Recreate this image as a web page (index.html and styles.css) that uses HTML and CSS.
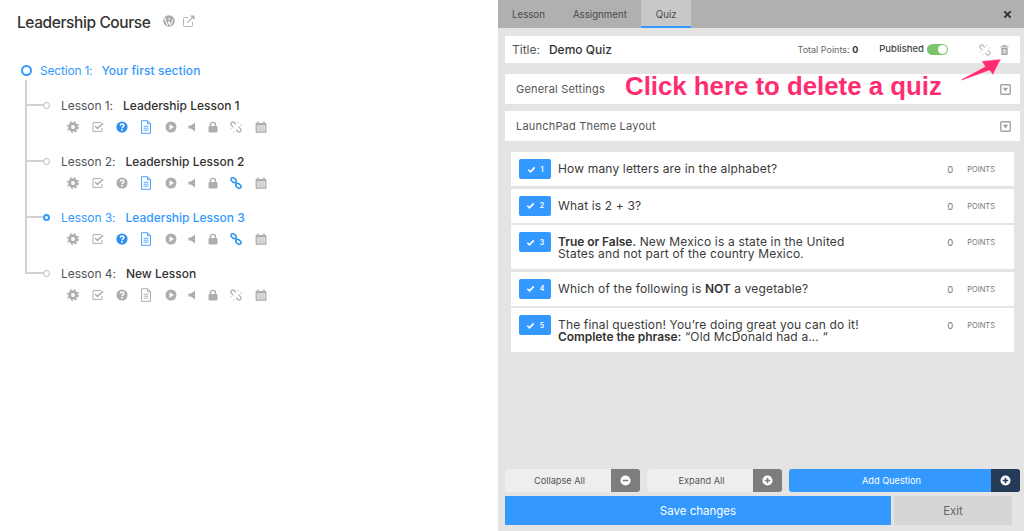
FILE: index.html
```html
<!DOCTYPE html>
<html lang="en">
<head>
<meta charset="utf-8">
<title>Leadership Course</title>
<link rel="stylesheet" href="styles.css">
</head>
<body>
<svg class="sprites" width="0" height="0" aria-hidden="true">
  <symbol id="i-gear" viewBox="0 0 12 12"><circle cx="6" cy="6" r="3.3" fill="none" stroke="currentColor" stroke-width="2.6"/><circle cx="6" cy="6" r="5" fill="none" stroke="currentColor" stroke-width="1.8" stroke-dasharray="2 1.93"/></symbol>
  <symbol id="i-check" viewBox="0 0 12 12"><path d="M10 7v3.4H1V1.600h8" fill="none" stroke="currentColor" stroke-width="1"/><path d="M3 5l2.400 2.400L11 2.200" fill="none" stroke="currentColor" stroke-width="1.500"/></symbol>
  <symbol id="i-help" viewBox="0 0 12 12"><circle cx="6" cy="6" r="5.600" fill="currentColor"/><path d="M4.200 4.600C4.300 3.500 5 3 6 3s1.900.6 1.900 1.600C7.900 5.900 6 5.800 6 7.300" fill="none" stroke="#fff" stroke-width="1.400"/><rect x="5.200" y="8" width="1.600" height="1.500" fill="#fff"/></symbol>
  <symbol id="i-doc" viewBox="0 0 12 14"><path d="M1.500.7h6l3 3v9.600h-9zM7.500.7v3h3" fill="none" stroke="currentColor" stroke-width="1"/><path d="M3.500 6.200h5M3.500 8.200h5M3.500 10.200h5" stroke="currentColor" stroke-width=".9"/></symbol>
  <symbol id="i-play" viewBox="0 0 12 12"><circle cx="6" cy="6" r="5.500" fill="currentColor"/><path d="M4.500 3.200L9 6l-4.500 2.800z" fill="#fff"/></symbol>
  <symbol id="i-sound" viewBox="0 0 12 12"><path d="M2.500 4.500H5L9 1.500v9l-4-3H2.500z" fill="currentColor"/></symbol>
  <symbol id="i-lock" viewBox="0 0 12 12"><rect x="1.500" y="5" width="9" height="6.500" rx="1" fill="currentColor"/><path d="M3.500 5.500V3.800a2.500 2.500 0 0 1 5 0v1.700" fill="none" stroke="currentColor" stroke-width="1.300"/></symbol>
  <symbol id="i-unlink" viewBox="0 0 12 12"><path d="M5.800 3.400L4.200 1.500a1.900 1.900 0 0 0-2.800 2.700L3.400 6.300M6.200 8.600l1.600 1.900a1.900 1.900 0 0 0 2.800-2.700L8.600 5.700" fill="none" stroke="currentColor" stroke-width="1.200"/><path d="M.4 8l1.200-.4M3.400 11.500l.4-1.300M7.800 2.200L8.300.7M10 4.300l1.400-.5" stroke="currentColor" stroke-width=".8"/></symbol>
  <symbol id="i-link" viewBox="0 0 12 12"><rect x=".8" y="1.200" width="5.600" height="3.800" rx="1.900" transform="rotate(40 3.600 3.100)" fill="none" stroke="currentColor" stroke-width="1.500"/><rect x="5.600" y="7" width="5.600" height="3.800" rx="1.900" transform="rotate(40 8.400 8.900)" fill="none" stroke="currentColor" stroke-width="1.500"/><path d="M4.800 4.800l2.400 2.400" stroke="currentColor" stroke-width="1.500"/></symbol>
  <symbol id="i-cal" viewBox="0 0 12 12"><path d="M.6 2h10.800v9.800H.6z" fill="currentColor"/><path d="M3 .3v2.400M9 .3v2.400" stroke="currentColor" stroke-width="1.400"/><path d="M1.500 5h9M1.500 7h9M1.500 9h9M3.200 4v7M5.200 4v7M7.200 4v7M9.200 4v7" stroke="#fff" stroke-width=".6"/></symbol>
  <symbol id="i-trash" viewBox="0 0 12 12"><path d="M1.500 2.500h9M4.200 2.300V1h3.600v1.300" fill="none" stroke="currentColor" stroke-width="1"/><path d="M2.500 3.500h7v8h-7z" fill="currentColor"/><path d="M4.500 5v5M6 5v5M7.500 5v5" stroke="#fff" stroke-width=".7"/></symbol>
  <symbol id="i-drop" viewBox="0 0 12 12"><rect x=".8" y=".8" width="10.400" height="10.400" rx="1.200" fill="none" stroke="currentColor" stroke-width="1.500"/><path d="M3 4.200h6L6 8.200z" fill="currentColor"/></symbol>
  <symbol id="i-tick" viewBox="0 0 10 10"><path d="M1.500 5.300l2.400 2.300 4.700-5" fill="none" stroke="currentColor" stroke-width="1.800"/></symbol>
  <symbol id="i-minus" viewBox="0 0 12 12"><circle cx="6" cy="6" r="5.500" fill="#fff"/><path d="M3 6h6" stroke="currentColor" stroke-width="1.800"/></symbol>
  <symbol id="i-plus" viewBox="0 0 12 12"><circle cx="6" cy="6" r="5.500" fill="#fff"/><path d="M3 6h6M6 3v6" stroke="currentColor" stroke-width="1.800"/></symbol>
</svg>

<main class="page">
  <section class="course">
    <header class="course-head">
      <h1 class="course-title">Leadership Course</h1>
      <svg class="head-icon wp" viewBox="0 0 12 12"><circle cx="6" cy="6" r="5.800" fill="currentColor"/><path d="M1.800 4.200L4.500 10.400 6 6.500 7.500 10.400 10.300 4.200M1.300 3.900h2.200M5 3.900h2.400" fill="none" stroke="#fff" stroke-width="1"/></svg>
      <svg class="head-icon ext" viewBox="0 0 12 12"><path d="M9.500 7v3.500a1 1 0 0 1-1 1h-7a1 1 0 0 1-1-1v-7a1 1 0 0 1 1-1H5" fill="none" stroke="currentColor" stroke-width="1"/><path d="M4.500 7.500L10 2" stroke="currentColor" stroke-width="1.300"/><path d="M7 .6h4.600v4.600z" fill="currentColor"/></svg>
    </header>
    <div class="section-row">
      <span class="section-dot"></span>
      <span class="section-num">Section 1:</span>
      <span class="section-name">Your first section</span>
    </div>
    <ul class="lessons">
      <li class="lesson">
        <div class="lesson-head"><span class="lesson-dot"></span><span class="lesson-num">Lesson 1:</span><strong class="lesson-name">Leadership Lesson 1</strong></div>
        <div class="tools">
          <svg class="tool"><use href="#i-gear"/></svg><svg class="tool"><use href="#i-check"/></svg><svg class="tool on"><use href="#i-help"/></svg><svg class="tool tall on"><use href="#i-doc"/></svg><svg class="tool"><use href="#i-play"/></svg><svg class="tool"><use href="#i-sound"/></svg><svg class="tool"><use href="#i-lock"/></svg><svg class="tool"><use href="#i-unlink"/></svg><svg class="tool"><use href="#i-cal"/></svg>
        </div>
      </li>
      <li class="lesson">
        <div class="lesson-head"><span class="lesson-dot"></span><span class="lesson-num">Lesson 2:</span><strong class="lesson-name">Leadership Lesson 2</strong></div>
        <div class="tools">
          <svg class="tool"><use href="#i-gear"/></svg><svg class="tool"><use href="#i-check"/></svg><svg class="tool"><use href="#i-help"/></svg><svg class="tool tall on"><use href="#i-doc"/></svg><svg class="tool"><use href="#i-play"/></svg><svg class="tool"><use href="#i-sound"/></svg><svg class="tool"><use href="#i-lock"/></svg><svg class="tool on"><use href="#i-link"/></svg><svg class="tool"><use href="#i-cal"/></svg>
        </div>
      </li>
      <li class="lesson current">
        <div class="lesson-head"><span class="lesson-dot"></span><span class="lesson-num">Lesson 3:</span><strong class="lesson-name">Leadership Lesson 3</strong></div>
        <div class="tools">
          <svg class="tool"><use href="#i-gear"/></svg><svg class="tool"><use href="#i-check"/></svg><svg class="tool on"><use href="#i-help"/></svg><svg class="tool tall on"><use href="#i-doc"/></svg><svg class="tool"><use href="#i-play"/></svg><svg class="tool"><use href="#i-sound"/></svg><svg class="tool"><use href="#i-lock"/></svg><svg class="tool on"><use href="#i-link"/></svg><svg class="tool"><use href="#i-cal"/></svg>
        </div>
      </li>
      <li class="lesson">
        <div class="lesson-head"><span class="lesson-dot"></span><span class="lesson-num">Lesson 4:</span><strong class="lesson-name">New Lesson</strong></div>
        <div class="tools">
          <svg class="tool"><use href="#i-gear"/></svg><svg class="tool"><use href="#i-check"/></svg><svg class="tool"><use href="#i-help"/></svg><svg class="tool tall"><use href="#i-doc"/></svg><svg class="tool"><use href="#i-play"/></svg><svg class="tool"><use href="#i-sound"/></svg><svg class="tool"><use href="#i-lock"/></svg><svg class="tool"><use href="#i-unlink"/></svg><svg class="tool"><use href="#i-cal"/></svg>
        </div>
      </li>
    </ul>
  </section>

  <section class="editor">
    <nav class="tabs">
      <span class="tab">Lesson</span>
      <span class="tab">Assignment</span>
      <span class="tab active">Quiz</span>
      <svg class="close" viewBox="0 0 10 10"><path d="M1.500 1.500l7 7M8.500 1.500l-7 7" stroke="currentColor" stroke-width="2.200"/></svg>
    </nav>

    <div class="title-row">
      <span class="title-label">Title:</span>
      <strong class="title-value">Demo Quiz</strong>
      <span class="total">Total Points: <b>0</b></span>
      <span class="published">Published</span>
      <span class="toggle"></span>
      <svg class="row-icon unlink"><use href="#i-unlink"/></svg>
      <svg class="row-icon trash"><use href="#i-trash"/></svg>
    </div>

    <div class="panel first"><span>General Settings</span><svg class="drop"><use href="#i-drop"/></svg></div>
    <div class="panel"><span>LaunchPad Theme Layout</span><svg class="drop"><use href="#i-drop"/></svg></div>

    <ol class="questions">
      <li class="question"><span class="badge"><svg class="tick"><use href="#i-tick"/></svg>1</span><p class="q-text">How many letters are in the alphabet?</p><span class="q-score">0</span><span class="q-unit">POINTS</span></li>
      <li class="question"><span class="badge"><svg class="tick"><use href="#i-tick"/></svg>2</span><p class="q-text">What is 2 + 3?</p><span class="q-score">0</span><span class="q-unit">POINTS</span></li>
      <li class="question"><span class="badge"><svg class="tick"><use href="#i-tick"/></svg>3</span><p class="q-text"><b>True or False.</b> New Mexico is a state in the United<br>States and not part of the country Mexico.</p><span class="q-score">0</span><span class="q-unit">POINTS</span></li>
      <li class="question"><span class="badge"><svg class="tick"><use href="#i-tick"/></svg>4</span><p class="q-text">Which of the following is <b>NOT</b> a vegetable?</p><span class="q-score">0</span><span class="q-unit">POINTS</span></li>
      <li class="question"><span class="badge"><svg class="tick"><use href="#i-tick"/></svg>5</span><p class="q-text">The final question! You’re doing great you can do it!<br><b>Complete the phrase:</b> “Old McDonald had a… “</p><span class="q-score">0</span><span class="q-unit">POINTS</span></li>
    </ol>

    <footer class="footer">
      <div class="actions">
        <button class="action"><span class="action-label">Collapse All</span><span class="action-icon"><svg class="action-svg"><use href="#i-minus"/></svg></span></button>
        <button class="action"><span class="action-label">Expand All</span><span class="action-icon"><svg class="action-svg"><use href="#i-plus"/></svg></span></button>
        <button class="action add"><span class="action-label">Add Question</span><span class="action-icon"><svg class="action-svg"><use href="#i-plus"/></svg></span></button>
      </div>
      <div class="submit">
        <button class="save">Save changes</button>
        <button class="exit">Exit</button>
      </div>
    </footer>

    <div class="callout">Click here to delete a quiz</div>
    <svg class="arrow" viewBox="0 0 50 30"><path d="M1 23.500L25 10.500 21.500 5 41 3 33 19 29.500 14.500 2 24.500z" fill="#ff2d6f" stroke="#fff" stroke-width=".5"/></svg>
  </section>
</main>
</body>
</html>
```
FILE: styles.css
```css
* { box-sizing: border-box; }
html, body { margin: 0; padding: 0; height: 531px; overflow: hidden; background: #fff; }
body { font-family: Inter, "Noto Sans", "Liberation Sans", sans-serif; color: #3a3a3a; }
.sprites { position: absolute; }
ul, ol { list-style: none; margin: 0; padding: 0; }
p, h1 { margin: 0; }
button { font: inherit; border: 0; padding: 0; cursor: pointer; }

.page { display: flex; width: 1024px; height: 531px; }

/* Course tree */
.course { width: 498px; flex: none; }
.course-head { display: flex; align-items: center; height: 44px; padding-left: 17px; }
.course-title { font-size: 15.500px; font-weight: 500; color: #333; letter-spacing: -.4px; }
.head-icon { color: #aaa; }
.wp { width: 12px; height: 12px; margin-left: 12px; position: relative; top: -1px; }
.ext { width: 12px; height: 12px; margin-left: 8px; color: #b5b5b5; position: relative; top: -1px; }

.section-row { display: flex; align-items: center; height: 20px; margin-top: 16px; padding-left: 21px; font-size: 12px; color: #3399ff; letter-spacing: .08px; }
.section-dot { width: 11px; height: 11px; border: 2px solid #3399ff; border-radius: 50%; margin-right: 8px; }
.section-num { letter-spacing: -.2px; }
.section-name { margin-left: 9px; font-weight: 500; }

.lessons { margin-left: 25px; }
.lesson { position: relative; height: 56px; padding-left: 36px; }
.lesson::before { content: ""; position: absolute; left: 0; top: 0; bottom: 0; width: 2px; background: #d2d2d2; }
.lesson:last-child::before { bottom: 30px; }
.lesson-head { position: relative; display: flex; align-items: center; height: 18px; margin-top: 0; top: 16px; font-size: 12px; }
.lesson-head::before { content: ""; position: absolute; left: -36px; top: 8px; width: 18px; height: 2px; background: #d2d2d2; }
.lesson-dot { position: absolute; left: -18px; top: 6px; width: 7px; height: 7px; border: 1px solid #b5b5b5; border-radius: 50%; background: #fff; }
.lesson-num { color: #555; letter-spacing: -.05px; }
.lesson-name { margin-left: 10px; font-weight: 500; color: #333; letter-spacing: 0; }
.current .lesson-num, .current .lesson-name { color: #3399ff; }
.current .lesson-dot { border: 2px solid #3399ff; }

.tools { display: grid; grid-template-columns: 25px 25px 23px 25px 25px 17px 25px 21px 29px; margin-top: 19.500px; margin-left: -1px; height: 18px; align-items: center; justify-items: center; }
.tool { width: 12px; height: 12px; color: #adadad; }
.tool.tall { height: 14px; }
.tool.on { color: #2f90ee; }
.tool.tall.on { color: #4da3f5; }

/* Editor */
.editor { position: relative; flex: 1; display: flex; flex-direction: column; background: #e4e4e4; }
.tabs { display: flex; align-items: stretch; height: 28px; background: #b0b0b0; font-size: 9.700px; color: #4a4a4a; }
.tab { display: flex; align-items: center; padding: 0 14px; }
.tab.active { background: #c8c8c8; border-bottom: 2px solid #3399ff; padding: 2px 14px 0 15px; }
.close { width: 9px; height: 9px; margin: auto 12px auto auto; color: #333; }

.title-row { display: flex; align-items: center; height: 27px; margin: 8px 4px 0 7px; padding: 0 10px 0 7px; background: #fff; }
.title-label { font-size: 12px; color: #555; }
.title-value { margin-left: 9px; font-size: 12px; font-weight: 500; color: #333; }
.total { margin-left: auto; font-size: 9px; color: #666; }
.total b { color: #333; }
.published { margin-left: 21px; font-size: 9.500px; font-weight: 500; color: #444; position: relative; top: -1px; }
.toggle { position: relative; width: 21px; height: 11px; margin-left: 3px; border-radius: 6px; background: #7dc36b; }
.toggle::after { content: ""; position: absolute; right: 1px; top: 1px; width: 9px; height: 9px; border-radius: 50%; background: #fff; }
.row-icon { width: 11px; height: 12px; color: #b0b0b0; }
.unlink { width: 12px; margin-left: 31px; color: #bbb; }
.trash { margin-left: 8px; color: #a5a5a5; }

.panel { display: flex; align-items: center; justify-content: space-between; height: 30px; margin: 7px 4px 0 7px; padding: 0 9px 0 11px; background: #fff; font-size: 11px; color: #555; letter-spacing: .2px; }
.panel.first { margin-top: 11px; }
.drop { width: 11px; height: 11px; color: #a3a3a3; }

.questions { display: flex; flex-direction: column; gap: 2.600px; margin: 11px 10px 0 13px; }
.question { display: flex; align-items: flex-start; min-height: 34px; padding: 7px 19px 7px 8px; background: #fff; }
.badge { flex: none; display: flex; align-items: center; justify-content: center; gap: 5px; width: 32px; height: 20px; border-radius: 2px; background: #3399ff; color: #fff; font-size: 7px; font-weight: 600; }
.tick { width: 9px; height: 9px; }
.q-text { flex: 1; margin: 4px 0 3px 7px; font-size: 12px; line-height: 11.500px; color: #3a3a3a; letter-spacing: .16px; }
.q-text b { font-weight: 600; color: #333; letter-spacing: -.06px; }
.q-score { margin-top: 5px; width: 20px; font-size: 9.500px; line-height: 11px; color: #777; }
.q-unit { margin-top: 5px; font-size: 7.500px; line-height: 11px; color: #777; }

.footer { margin-top: auto; padding: 0 4px 6px 7px; }
.actions { display: flex; gap: 7px; height: 23px; }
.action { display: flex; width: 135px; height: 23px; border-radius: 3px; overflow: hidden; background: #eee; color: #555; font-size: 9.200px; }
.action-label { flex: 1; align-self: center; text-align: center; padding-left: 3px; }
.action-icon { display: flex; align-items: center; justify-content: center; width: 29px; background: #7d7d7d; color: #7d7d7d; }
.action-svg { width: 11px; height: 11px; }
.action.add { flex: 1; background: #3399ff; color: #fff; }
.add .action-icon { background: #233b57; color: #233b57; }
.submit { display: flex; gap: 3px; margin-top: 4px; padding-right: 8px; }
.save { flex: 1; height: 29px; background: #3399ff; color: #fff; font-size: 11.500px; }
.exit { width: 118px; height: 29px; background: #d6d6d6; color: #666; font-size: 11.500px; }

/* Annotation */
.callout { position: absolute; left: 127px; top: 71px; font-family: "Liberation Sans", Arial, sans-serif; font-size: 25.800px; line-height: 30px; font-weight: 700; color: #ff2d6f; white-space: nowrap; text-shadow: 0 0 2px #fff, 1px 1px 1px #fff, -1px -1px 1px #fff, 1px -1px 1px #fff, -1px 1px 1px #fff; }
.arrow { position: absolute; left: 462px; top: 56px; width: 50px; height: 30px; }
```
